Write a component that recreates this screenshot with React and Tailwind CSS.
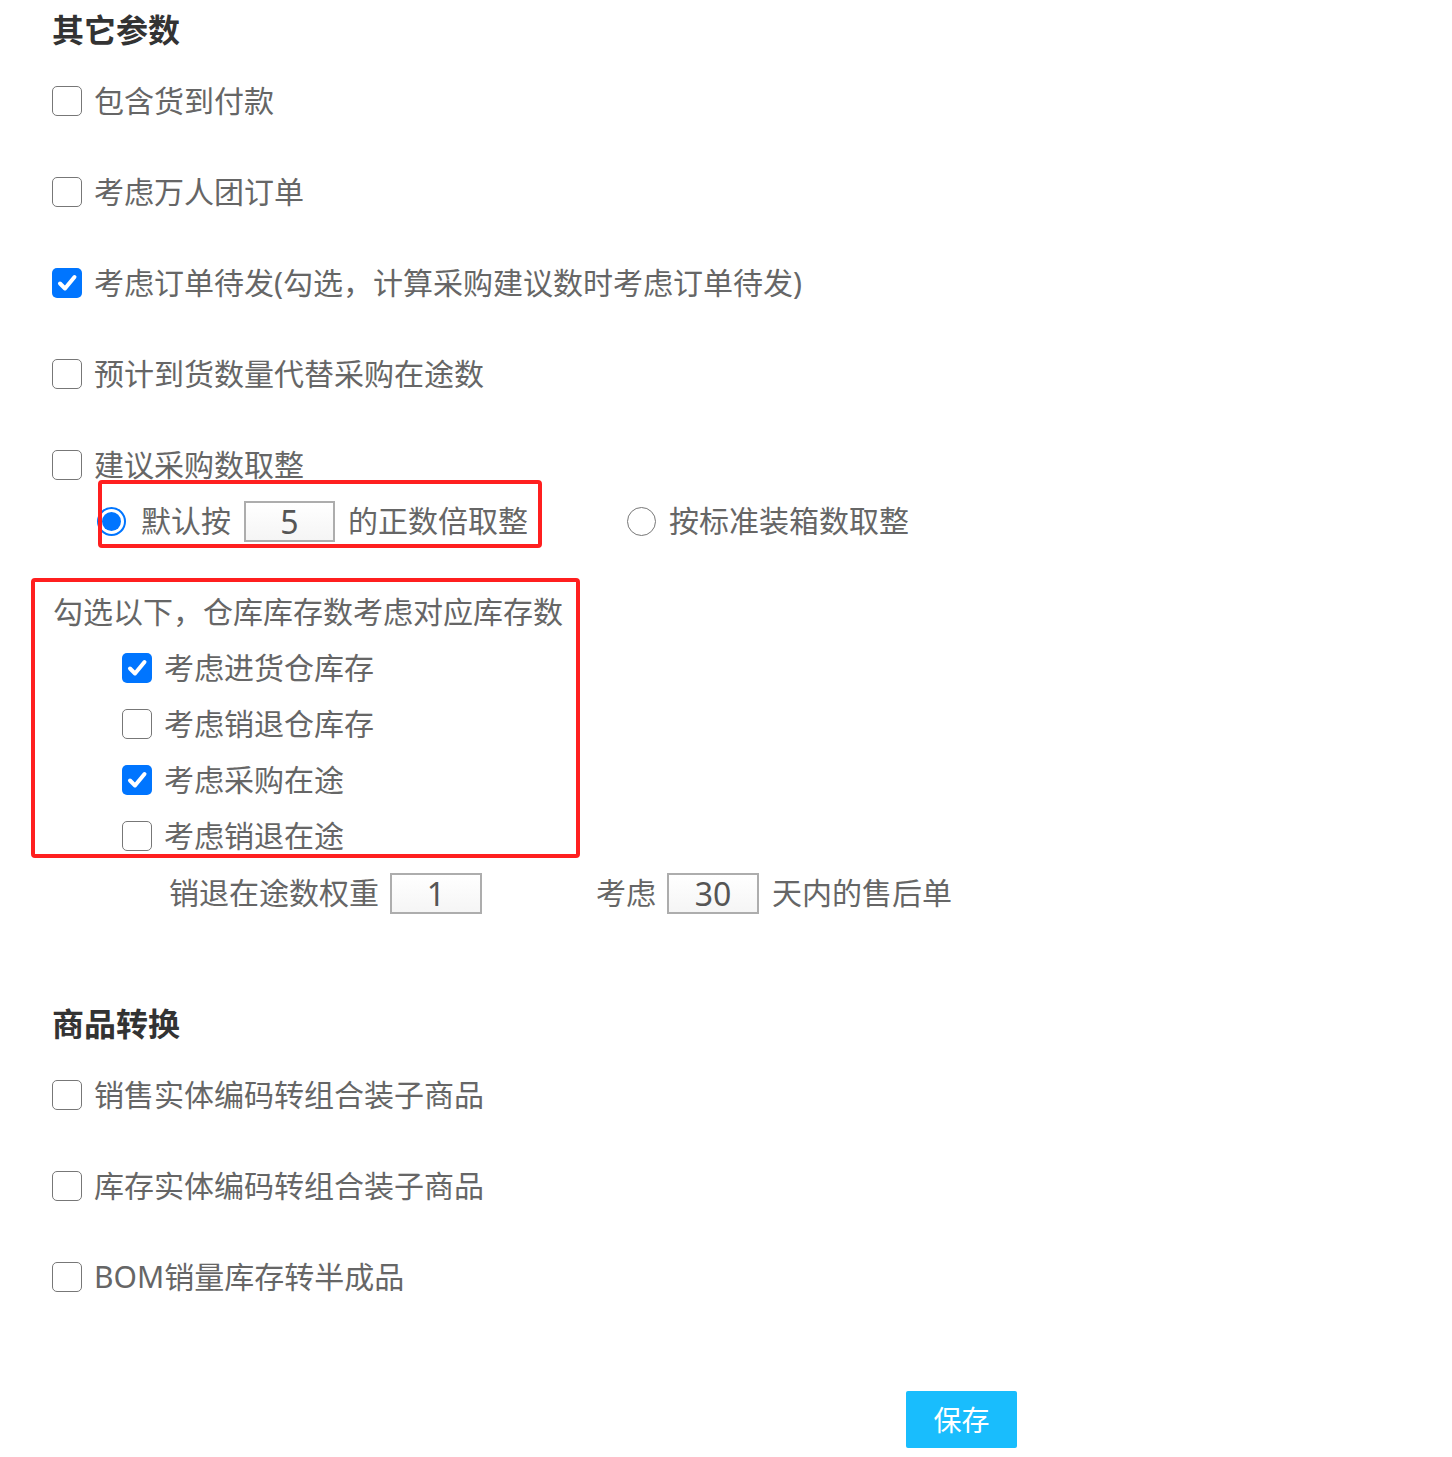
import React from 'react'

const font = { fontFamily: '"Noto Sans", "Noto Sans CJK SC", sans-serif' }

function Checkbox({ checked }) {
  if (checked) {
    return (
      <span className="w-[30px] h-[30px] rounded-[5px] bg-[#0075ff] flex items-center justify-center flex-shrink-0">
        <svg width="22" height="22" viewBox="0 0 22 22" fill="none">
          <path d="M4 11.5 L9 16.5 L18.5 5" stroke="white" strokeWidth="4" strokeLinecap="round" strokeLinejoin="round" />
        </svg>
      </span>
    )
  }
  return <span className="w-[30px] h-[30px] rounded-[5px] border border-[#777] bg-white flex-shrink-0" />
}

function Radio({ checked }) {
  return (
    <span
      className={`w-[29px] h-[29px] rounded-full flex items-center justify-center flex-shrink-0 bg-white ${
        checked ? 'border-2 border-[#0075ff]' : 'border border-[#777]'
      }`}
    >
      {checked && <span className="w-[19px] h-[19px] rounded-full bg-[#0075ff]" />}
    </span>
  )
}

function NumBox({ value, w = 'w-[91px]' }) {
  return (
    <span
      className={`${w} h-[41px] border-2 border-[#adadad] bg-gradient-to-b from-white to-[#f5f5f5] flex items-center justify-center pt-[2px] text-[32px] leading-none text-[#555] flex-shrink-0`}
    >
      {value}
    </span>
  )
}

function Row({ checked, label }) {
  return (
    <div className="h-[30px] flex items-center">
      <Checkbox checked={checked} />
      <span className="ml-[12px] text-[30px] leading-none text-[#666] whitespace-nowrap">{label}</span>
    </div>
  )
}

export default function App() {
  return (
    <div className="min-h-[1457px] bg-white pl-[52px] pt-[14px]" style={font}>
      {/* 其它参数 */}
      <h2 className="text-[32px] leading-[32px] font-bold text-[#333]">其它参数</h2>
      <div className="mt-[40px] flex flex-col gap-[61px]">
        <Row label="包含货到付款" />
        <Row label="考虑万人团订单" />
        <Row checked label="考虑订单待发(勾选，计算采购建议数时考虑订单待发)" />
        <Row label="预计到货数量代替采购在途数" />
        <Row label="建议采购数取整" />
      </div>

      {/* 取整方式 */}
      <div className="h-[82px] flex items-center text-[30px] leading-none text-[#666] whitespace-nowrap">
        <div className="relative ml-[45px] flex items-center">
          <Radio checked />
          <span className="ml-[15px]">默认按</span>
          <span className="ml-[13px]"><NumBox value="5" /></span>
          <span className="ml-[13px]">的正数倍取整</span>
          <div className="absolute left-[1px] top-[-21px] w-[444px] h-[68px] border-4 border-[#ff1f1f] rounded-[4px] pointer-events-none" />
        </div>
        <div className="ml-[99px] flex items-center">
          <Radio />
          <span className="ml-[13px]">按标准装箱数取整</span>
        </div>
      </div>

      {/* 仓库库存 */}
      <div className="mt-[16px] ml-[-21px] w-[549px] h-[280px] border-4 border-[#ff1f1f] rounded-[4px] pt-[2px] text-[30px] leading-none text-[#666] whitespace-nowrap">
        <div className="h-[56px] flex items-center pl-[18px]">勾选以下，仓库库存数考虑对应库存数</div>
        {[
          ['考虑进货仓库存', true],
          ['考虑销退仓库存', false],
          ['考虑采购在途', true],
          ['考虑销退在途', false],
        ].map(([label, checked]) => (
          <div key={label} className="h-[56px] flex items-center pl-[87px]">
            <Checkbox checked={checked} />
            <span className="ml-[12px]">{label}</span>
          </div>
        ))}
      </div>

      <div className="h-[70px] flex items-center text-[30px] leading-none text-[#666] whitespace-nowrap">
        <span className="ml-[117px]">销退在途数权重</span>
        <span className="ml-[11px]"><NumBox value="1" w="w-[92px]" /></span>
        <span className="ml-[114px]">考虑</span>
        <span className="ml-[11px]"><NumBox value="30" w="w-[92px]" /></span>
        <span className="ml-[13px]">天内的售后单</span>
      </div>

      {/* 商品转换 */}
      <h2 className="mt-[80px] text-[32px] leading-[32px] font-bold text-[#333]">商品转换</h2>
      <div className="mt-[40px] flex flex-col gap-[61px]">
        <Row label="销售实体编码转组合装子商品" />
        <Row label="库存实体编码转组合装子商品" />
        <Row label="BOM销量库存转半成品" />
      </div>

      <button className="mt-[99px] ml-[854px] w-[111px] h-[57px] bg-[#19bdfd] rounded-[2px] text-white text-[28px] leading-none">
        保存
      </button>
    </div>
  )
}
